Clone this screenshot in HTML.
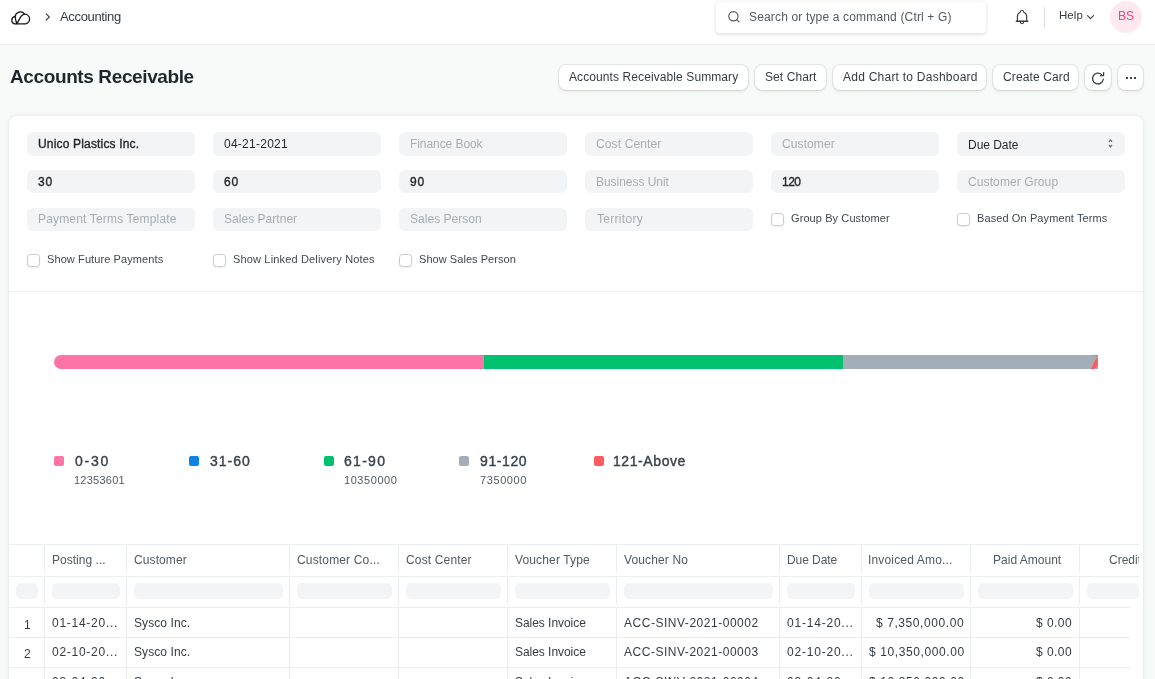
<!DOCTYPE html>
<html><head><meta charset="utf-8">
<style>
*{box-sizing:border-box;margin:0;padding:0}
html,body{width:1155px;height:679px;overflow:hidden}
body{position:relative;background:#F8F9F9;font-family:"Liberation Sans",sans-serif;color:#1F272E}
.t{position:absolute;white-space:nowrap;will-change:transform}
.a{position:absolute}
.hdr{position:absolute;left:0;top:0;width:1155px;height:45px;background:#fff;border-bottom:1px solid #EBEDEF}
.search{position:absolute;left:716px;top:1.5px;width:270px;height:31.5px;background:#fff;border-radius:4px;box-shadow:0 1.5px 3px rgba(25,39,52,0.10),0 0 4px rgba(25,39,52,0.07)}
.avatar{position:absolute;left:1110px;top:1px;width:32px;height:32px;border-radius:50%;background:#FFE8F0}
.btn{position:absolute;top:65px;height:25px;background:#fff;border-radius:7px;box-shadow:0 0.5px 0 rgba(0,0,0,0.05),0 0 0 1px rgba(0,0,0,0.08),0 2px 4px rgba(0,0,0,0.06)}
.card{position:absolute;left:9px;top:116px;width:1134px;height:640px;background:#fff;border-radius:8px;box-shadow:0 1px 2px rgba(25,39,52,0.05),0 0 4px rgba(25,39,52,0.10)}
.inp{position:absolute;width:168px;background:#F3F4F5;border-radius:6px}
.cb{position:absolute;width:13px;height:13px;border:1px solid #C5CBD1;border-radius:3.5px;background:#fff;box-shadow:0 1px 2px rgba(0,0,0,0.08)}
.sep{position:absolute;left:9px;top:291px;width:1134px;height:1px;background:#EDEFF1}
.bar{position:absolute;top:355px;height:14px}
.lg{position:absolute;top:456px;width:10px;height:10px;border-radius:2px}
.hl{position:absolute;height:1px;background:#EBEEF0}
.vl{position:absolute;width:1px;background:#EBEEF0}
.fi{position:absolute;top:583px;height:16px;background:#F3F4F5;border-radius:5px}
</style></head><body>
<div class="hdr"></div>
<svg class="a" style="left:0;top:0" width="60" height="40" viewBox="0 0 60 40" fill="none" stroke="#171717" stroke-width="1.25" stroke-linecap="round" stroke-linejoin="round">
 <path d="M14.3 23.9 L25.6 23.9 A4.95 4.95 0 0 0 24.6 14.1 A5.35 5.35 0 0 0 15.1 16.4 A3.9 3.9 0 0 0 14.3 23.9 Z"/>
 <path d="M15.1 16.4 C15.4 19.6 16.1 21.9 16.9 23.6"/>
 <path d="M16.9 23.6 C18.6 21.2 19.8 17.6 21.6 15.8 C22.5 14.9 23.5 14.4 24.6 14.1"/>
</svg>
<svg class="a" style="left:0;top:0" width="60" height="40" fill="none" stroke="#3A444D" stroke-width="1.15" stroke-linecap="round" stroke-linejoin="round"><path d="M46.2 13.8 L49.3 17 L46.2 20.2"/></svg>
<div class="search"></div>
<svg class="a" style="left:720px;top:0" width="30" height="34" fill="none" stroke="#505A62" stroke-width="1.2" stroke-linecap="round"><circle cx="13.4" cy="16.2" r="4.6"/><path d="M16.8 19.6 L19 21.8"/></svg>
<svg class="a" style="left:1010px;top:0" width="24" height="34" fill="none" stroke="#333C44" stroke-width="1.15" stroke-linecap="round" stroke-linejoin="round"><path d="M7.4 21.2 L7.4 16.6 C7.4 14.3 8.6 12.7 10.3 12.2 C10.3 10.8 10.9 10.2 12 10.2 C13.1 10.2 13.7 10.8 13.7 12.2 C15.4 12.7 16.7 14.3 16.7 16.6 L16.7 21.2"/><path d="M6.3 21.3 L17.8 21.3" stroke-width="1.4"/><path d="M10.3 21.8 C10.3 23.1 11 23.7 12 23.7 C13 23.7 13.7 23.1 13.7 21.8"/></svg>
<div class="a" style="left:1044px;top:6.5px;width:1px;height:21px;background:#DCE0E3"></div>
<svg class="a" style="left:1080px;top:0" width="20" height="34" fill="none" stroke="#333C44" stroke-width="1.1" stroke-linecap="round" stroke-linejoin="round"><path d="M7.5 15.6 L10.5 18.6 L13.5 15.6"/></svg>
<div class="avatar"></div>

<div class="btn" style="left:559px;width:189px"></div>
<div class="btn" style="left:755px;width:71px"></div>
<div class="btn" style="left:833px;width:153px"></div>
<div class="btn" style="left:993px;width:85px"></div>
<div class="btn" style="left:1085px;width:26px"></div>
<div class="btn" style="left:1118px;width:25px"></div>
<svg class="a" style="left:1084px;top:64px" width="28" height="28" fill="none" stroke="#333C44" stroke-width="1.25" stroke-linecap="round" stroke-linejoin="round"><path d="M19.3 15.2 A5.4 5.4 0 1 1 17.6 10.6"/><path d="M19.6 8.6 L19.6 11.6 L16.6 11.6"/></svg>
<div class="a" style="left:1126px;top:77px;width:2px;height:2px;background:#3A434B"></div>
<div class="a" style="left:1130px;top:77px;width:2px;height:2px;background:#3A434B"></div>
<div class="a" style="left:1134px;top:77px;width:2px;height:2px;background:#3A434B"></div>

<div class="card"></div>
<div class="inp" style="left:27px;top:132px;height:24px"></div>
<div class="inp" style="left:213px;top:132px;height:24px"></div>
<div class="inp" style="left:399px;top:132px;height:24px"></div>
<div class="inp" style="left:585px;top:132px;height:24px"></div>
<div class="inp" style="left:771px;top:132px;height:24px"></div>
<div class="inp" style="left:957px;top:132px;height:24px"></div>
<div class="inp" style="left:27px;top:170px;height:23px"></div>
<div class="inp" style="left:213px;top:170px;height:23px"></div>
<div class="inp" style="left:399px;top:170px;height:23px"></div>
<div class="inp" style="left:585px;top:170px;height:23px"></div>
<div class="inp" style="left:771px;top:170px;height:23px"></div>
<div class="inp" style="left:957px;top:170px;height:23px"></div>
<div class="inp" style="left:27px;top:208px;height:23px"></div>
<div class="inp" style="left:213px;top:208px;height:23px"></div>
<div class="inp" style="left:399px;top:208px;height:23px"></div>
<div class="inp" style="left:585px;top:208px;height:23px"></div>
<svg class="a" style="left:1100px;top:132px" width="20" height="24" fill="none" stroke="#687178" stroke-width="1.3" stroke-linecap="round" stroke-linejoin="round"><path d="M9.35 9.3 L10.5 8 L11.65 9.3"/><path d="M9.35 13.5 L10.5 14.8 L11.65 13.5"/></svg>
<div class="cb" style="left:771px;top:213px"></div>
<div class="cb" style="left:957px;top:213px"></div>
<div class="cb" style="left:27px;top:254px"></div>
<div class="cb" style="left:213px;top:254px"></div>
<div class="cb" style="left:399px;top:254px"></div>
<div class="sep"></div>

<div class="bar" style="left:54px;width:430px;background:#FF74A6;border-radius:7px 0 0 7px"></div>
<div class="bar" style="left:483.5px;width:359px;background:#00C26E"></div>
<div class="bar" style="left:842.5px;width:255.5px;background:#A2AEB8"></div>
<svg class="a" style="left:1080px;top:350px" width="20" height="24"><path d="M10.8 19.2 L16.6 7.5 Q18 9.5 18 13 Q17.8 18.6 13 19.2 Z" fill="#FF5A5F"/><path d="M12 5 L18 5 L18 6 L16.5 6.2 Q15 5.6 12 5.6 Z" fill="#FF5A5F" opacity="0.8"/></svg>
<div class="lg" style="left:54px;background:#FF74A6"></div>
<div class="lg" style="left:189px;background:#0C84E4"></div>
<div class="lg" style="left:324px;background:#00C26E"></div>
<div class="lg" style="left:459px;background:#A2AEB8"></div>
<div class="lg" style="left:594px;background:#FF5A5F"></div>

<div class="hl" style="left:9px;top:544px;width:1130px"></div>
<div class="hl" style="left:9px;top:576px;width:1130px"></div>
<div class="hl" style="left:9px;top:607px;width:1121px"></div>
<div class="hl" style="left:9px;top:637px;width:1121px"></div>
<div class="hl" style="left:9px;top:667px;width:1121px"></div>
<div class="vl" style="left:44.0px;top:545px;height:28px"></div>
<div class="vl" style="left:44.0px;top:577px;height:27px"></div>
<div class="vl" style="left:44.0px;top:608px;height:71px"></div>
<div class="vl" style="left:126.0px;top:545px;height:28px"></div>
<div class="vl" style="left:126.0px;top:577px;height:27px"></div>
<div class="vl" style="left:126.0px;top:608px;height:71px"></div>
<div class="vl" style="left:289.0px;top:545px;height:28px"></div>
<div class="vl" style="left:289.0px;top:577px;height:27px"></div>
<div class="vl" style="left:289.0px;top:608px;height:71px"></div>
<div class="vl" style="left:398.0px;top:545px;height:28px"></div>
<div class="vl" style="left:398.0px;top:577px;height:27px"></div>
<div class="vl" style="left:398.0px;top:608px;height:71px"></div>
<div class="vl" style="left:507.0px;top:545px;height:28px"></div>
<div class="vl" style="left:507.0px;top:577px;height:27px"></div>
<div class="vl" style="left:507.0px;top:608px;height:71px"></div>
<div class="vl" style="left:616.0px;top:545px;height:28px"></div>
<div class="vl" style="left:616.0px;top:577px;height:27px"></div>
<div class="vl" style="left:616.0px;top:608px;height:71px"></div>
<div class="vl" style="left:779.0px;top:545px;height:28px"></div>
<div class="vl" style="left:779.0px;top:577px;height:27px"></div>
<div class="vl" style="left:779.0px;top:608px;height:71px"></div>
<div class="vl" style="left:861.0px;top:545px;height:28px"></div>
<div class="vl" style="left:861.0px;top:577px;height:27px"></div>
<div class="vl" style="left:861.0px;top:608px;height:71px"></div>
<div class="vl" style="left:970.0px;top:545px;height:28px"></div>
<div class="vl" style="left:970.0px;top:577px;height:27px"></div>
<div class="vl" style="left:970.0px;top:608px;height:71px"></div>
<div class="vl" style="left:1079.0px;top:545px;height:28px"></div>
<div class="vl" style="left:1079.0px;top:577px;height:27px"></div>
<div class="vl" style="left:1079.0px;top:608px;height:71px"></div>
<div class="fi" style="left:16px;width:21.5px"></div>
<div class="fi" style="left:51.5px;width:68.0px"></div>
<div class="fi" style="left:133.5px;width:149.0px"></div>
<div class="fi" style="left:296.5px;width:95.0px"></div>
<div class="fi" style="left:405.5px;width:95.0px"></div>
<div class="fi" style="left:514.5px;width:95.0px"></div>
<div class="fi" style="left:623.5px;width:149.0px"></div>
<div class="fi" style="left:786.5px;width:68.0px"></div>
<div class="fi" style="left:868.5px;width:95.0px"></div>
<div class="fi" style="left:977.5px;width:95.0px"></div>
<div class="fi" style="left:1086.5px;width:52.5px"></div>
<span class="t" style="left:60.00px;top:10.20px;font-size:13px;line-height:13px;color:#333C44;letter-spacing:-0.343px;">Accounting</span>
<span class="t" style="left:748.50px;top:10.64px;font-size:12px;line-height:12px;color:#505A62;letter-spacing:0.160px;">Search or type a command (Ctrl + G)</span>
<span class="t" style="left:1059.00px;top:10.37px;font-size:11.5px;line-height:11.5px;color:#333C44;letter-spacing:0.048px;">Help</span>
<span class="t" style="left:1117.50px;top:10.47px;font-size:12.2px;line-height:12.2px;color:#EC4585;letter-spacing:-0.129px;">BS</span>
<span class="t" style="left:10.00px;top:67.12px;font-size:19px;line-height:19px;color:#1F272E;font-weight:700;letter-spacing:-0.387px;">Accounts Receivable</span>
<span class="t" style="left:569.00px;top:70.84px;font-size:12px;line-height:12px;color:#333C44;letter-spacing:0.095px;">Accounts Receivable Summary</span>
<span class="t" style="left:764.90px;top:70.84px;font-size:12px;line-height:12px;color:#333C44;letter-spacing:0.081px;">Set Chart</span>
<span class="t" style="left:842.80px;top:70.84px;font-size:12px;line-height:12px;color:#333C44;letter-spacing:0.241px;">Add Chart to Dashboard</span>
<span class="t" style="left:1002.70px;top:70.84px;font-size:12px;line-height:12px;color:#333C44;letter-spacing:0.121px;">Create Card</span>
<span class="t" style="left:38.30px;top:137.84px;font-size:12px;line-height:12px;color:#1F272E;-webkit-text-stroke:0.38px currentColor;letter-spacing:0.172px;">Unico Plastics Inc.</span>
<span class="t" style="left:223.80px;top:137.84px;font-size:12px;line-height:12px;color:#1F272E;letter-spacing:0.255px;">04-21-2021</span>
<span class="t" style="left:410.10px;top:137.84px;font-size:12px;line-height:12px;color:#A6ADB4;letter-spacing:-0.071px;">Finance Book</span>
<span class="t" style="left:596.30px;top:137.84px;font-size:12px;line-height:12px;color:#A6ADB4;letter-spacing:0.127px;">Cost Center</span>
<span class="t" style="left:782.10px;top:137.84px;font-size:12px;line-height:12px;color:#A6ADB4;letter-spacing:0.097px;">Customer</span>
<span class="t" style="left:967.90px;top:139.14px;font-size:12px;line-height:12px;color:#1F272E;letter-spacing:-0.032px;">Due Date</span>
<span class="t" style="left:38.30px;top:176.04px;font-size:12px;line-height:12px;color:#1F272E;-webkit-text-stroke:0.38px currentColor;letter-spacing:0.926px;">30</span>
<span class="t" style="left:223.80px;top:176.04px;font-size:12px;line-height:12px;color:#1F272E;-webkit-text-stroke:0.38px currentColor;letter-spacing:0.926px;">60</span>
<span class="t" style="left:410.10px;top:176.04px;font-size:12px;line-height:12px;color:#1F272E;-webkit-text-stroke:0.38px currentColor;letter-spacing:0.926px;">90</span>
<span class="t" style="left:596.30px;top:176.04px;font-size:12px;line-height:12px;color:#A6ADB4;letter-spacing:-0.036px;">Business Unit</span>
<span class="t" style="left:782.10px;top:176.04px;font-size:12px;line-height:12px;color:#1F272E;-webkit-text-stroke:0.38px currentColor;letter-spacing:-0.524px;">120</span>
<span class="t" style="left:967.90px;top:176.04px;font-size:12px;line-height:12px;color:#A6ADB4;letter-spacing:0.106px;">Customer Group</span>
<span class="t" style="left:38.10px;top:213.44px;font-size:12px;line-height:12px;color:#A6ADB4;letter-spacing:0.166px;">Payment Terms Template</span>
<span class="t" style="left:224.00px;top:213.44px;font-size:12px;line-height:12px;color:#A6ADB4;letter-spacing:0.033px;">Sales Partner</span>
<span class="t" style="left:410.10px;top:213.44px;font-size:12px;line-height:12px;color:#A6ADB4;letter-spacing:0.027px;">Sales Person</span>
<span class="t" style="left:596.50px;top:213.44px;font-size:12px;line-height:12px;color:#A6ADB4;letter-spacing:0.296px;">Territory</span>
<span class="t" style="left:791.30px;top:212.79px;font-size:11px;line-height:11px;color:#3F4850;letter-spacing:0.091px;">Group By Customer</span>
<span class="t" style="left:976.60px;top:212.79px;font-size:11px;line-height:11px;color:#3F4850;letter-spacing:0.101px;">Based On Payment Terms</span>
<span class="t" style="left:46.80px;top:253.89px;font-size:11px;line-height:11px;color:#3F4850;letter-spacing:0.098px;">Show Future Payments</span>
<span class="t" style="left:233.10px;top:253.89px;font-size:11px;line-height:11px;color:#3F4850;letter-spacing:0.157px;">Show Linked Delivery Notes</span>
<span class="t" style="left:419.10px;top:253.89px;font-size:11px;line-height:11px;color:#3F4850;letter-spacing:0.051px;">Show Sales Person</span>
<span class="t" style="left:74.50px;top:453.75px;font-size:14px;line-height:14px;color:#36414C;-webkit-text-stroke:0.38px currentColor;letter-spacing:1.722px;">0-30</span>
<span class="t" style="left:209.80px;top:453.75px;font-size:14px;line-height:14px;color:#36414C;-webkit-text-stroke:0.38px currentColor;letter-spacing:0.995px;">31-60</span>
<span class="t" style="left:344.00px;top:453.75px;font-size:14px;line-height:14px;color:#36414C;-webkit-text-stroke:0.38px currentColor;letter-spacing:1.295px;">61-90</span>
<span class="t" style="left:479.60px;top:453.75px;font-size:14px;line-height:14px;color:#36414C;-webkit-text-stroke:0.38px currentColor;letter-spacing:0.599px;">91-120</span>
<span class="t" style="left:612.90px;top:453.75px;font-size:14px;line-height:14px;color:#36414C;-webkit-text-stroke:0.38px currentColor;letter-spacing:0.584px;">121-Above</span>
<span class="t" style="left:74.00px;top:474.69px;font-size:11px;line-height:11px;color:#505A62;letter-spacing:0.254px;">12353601</span>
<span class="t" style="left:344.00px;top:474.69px;font-size:11px;line-height:11px;color:#505A62;letter-spacing:0.568px;">10350000</span>
<span class="t" style="left:479.60px;top:474.69px;font-size:11px;line-height:11px;color:#505A62;letter-spacing:0.599px;">7350000</span>
<span class="t" style="left:51.90px;top:554.24px;font-size:12px;line-height:12px;color:#505A62;letter-spacing:0.027px;">Posting ...</span>
<span class="t" style="left:133.80px;top:554.24px;font-size:12px;line-height:12px;color:#505A62;letter-spacing:0.097px;">Customer</span>
<span class="t" style="left:296.60px;top:554.24px;font-size:12px;line-height:12px;color:#505A62;letter-spacing:0.157px;">Customer Co...</span>
<span class="t" style="left:406.20px;top:554.24px;font-size:12px;line-height:12px;color:#505A62;letter-spacing:0.157px;">Cost Center</span>
<span class="t" style="left:515.00px;top:554.24px;font-size:12px;line-height:12px;color:#505A62;letter-spacing:0.145px;">Voucher Type</span>
<span class="t" style="left:623.80px;top:554.24px;font-size:12px;line-height:12px;color:#505A62;letter-spacing:0.130px;">Voucher No</span>
<span class="t" style="left:786.70px;top:554.24px;font-size:12px;line-height:12px;color:#505A62;letter-spacing:-0.060px;">Due Date</span>
<span class="t" style="left:867.80px;top:554.24px;font-size:12px;line-height:12px;color:#505A62;letter-spacing:0.166px;">Invoiced Amo...</span>
<span class="t" style="left:993.20px;top:554.24px;font-size:12px;line-height:12px;color:#505A62;letter-spacing:0.013px;">Paid Amount</span>
<div style="position:absolute;left:0;top:0;width:1139px;height:679px;overflow:hidden"><span class="t" style="left:1108.50px;top:554.24px;font-size:12px;line-height:12px;color:#505A62;">Credit Note</span></div>
<span class="t" style="left:23.90px;top:618.54px;font-size:12px;line-height:12px;color:#333C44;">1</span>
<span class="t" style="left:51.90px;top:616.74px;font-size:12px;line-height:12px;color:#333C44;letter-spacing:0.730px;">01-14-20...</span>
<span class="t" style="left:133.80px;top:616.74px;font-size:12px;line-height:12px;color:#333C44;letter-spacing:0.087px;">Sysco Inc.</span>
<span class="t" style="left:515.00px;top:616.74px;font-size:12px;line-height:12px;color:#333C44;letter-spacing:-0.042px;">Sales Invoice</span>
<span class="t" style="left:623.90px;top:616.74px;font-size:12px;line-height:12px;color:#333C44;letter-spacing:0.524px;">ACC-SINV-2021-00002</span>
<span class="t" style="left:786.70px;top:616.74px;font-size:12px;line-height:12px;color:#333C44;letter-spacing:0.790px;">01-14-20...</span>
<span class="t" style="left:876.10px;top:616.74px;font-size:12px;line-height:12px;color:#333C44;letter-spacing:0.577px;">$ 7,350,000.00</span>
<span class="t" style="left:1036.30px;top:616.74px;font-size:12px;line-height:12px;color:#333C44;letter-spacing:0.442px;">$ 0.00</span>
<span class="t" style="left:23.90px;top:648.34px;font-size:12px;line-height:12px;color:#333C44;">2</span>
<span class="t" style="left:51.90px;top:646.24px;font-size:12px;line-height:12px;color:#333C44;letter-spacing:0.730px;">02-10-20...</span>
<span class="t" style="left:133.80px;top:646.24px;font-size:12px;line-height:12px;color:#333C44;letter-spacing:0.087px;">Sysco Inc.</span>
<span class="t" style="left:515.00px;top:646.24px;font-size:12px;line-height:12px;color:#333C44;letter-spacing:-0.042px;">Sales Invoice</span>
<span class="t" style="left:623.90px;top:646.24px;font-size:12px;line-height:12px;color:#333C44;letter-spacing:0.524px;">ACC-SINV-2021-00003</span>
<span class="t" style="left:786.70px;top:646.24px;font-size:12px;line-height:12px;color:#333C44;letter-spacing:0.790px;">02-10-20...</span>
<span class="t" style="left:868.60px;top:646.24px;font-size:12px;line-height:12px;color:#333C44;letter-spacing:0.595px;">$ 10,350,000.00</span>
<span class="t" style="left:1036.30px;top:646.24px;font-size:12px;line-height:12px;color:#333C44;letter-spacing:0.442px;">$ 0.00</span>
<span class="t" style="left:23.90px;top:677.64px;font-size:12px;line-height:12px;color:#333C44;">3</span>
<span class="t" style="left:51.90px;top:675.84px;font-size:12px;line-height:12px;color:#333C44;letter-spacing:0.730px;">03-04-20...</span>
<span class="t" style="left:133.80px;top:675.84px;font-size:12px;line-height:12px;color:#333C44;letter-spacing:0.087px;">Sysco Inc.</span>
<span class="t" style="left:515.00px;top:675.84px;font-size:12px;line-height:12px;color:#333C44;letter-spacing:-0.042px;">Sales Invoice</span>
<span class="t" style="left:623.90px;top:675.84px;font-size:12px;line-height:12px;color:#333C44;letter-spacing:0.524px;">ACC-SINV-2021-00004</span>
<span class="t" style="left:786.70px;top:675.84px;font-size:12px;line-height:12px;color:#333C44;letter-spacing:0.790px;">03-04-20...</span>
<span class="t" style="left:868.60px;top:675.84px;font-size:12px;line-height:12px;color:#333C44;letter-spacing:0.595px;">$ 10,350,000.00</span>
<span class="t" style="left:1036.30px;top:675.84px;font-size:12px;line-height:12px;color:#333C44;letter-spacing:0.442px;">$ 0.00</span>
</body></html>
